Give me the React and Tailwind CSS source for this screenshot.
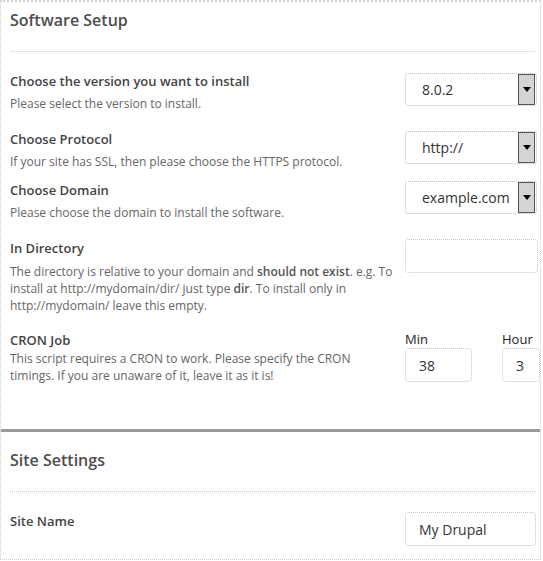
import React from 'react';

const SelectBox = ({ value, className = '' }) => (
    <div className={`flex h-[33px] w-[132px] items-center rounded-[3px] border border-dotted border-[#bdbdbd] pl-[16px] pr-px ${className}`}>
        <span className="flex-1 text-[14px] text-[#333]">{value}</span>
        <div className="flex h-[31px] w-[17px] items-center justify-center border border-[#555] bg-[#d4d4d4]">
            <svg width="8" height="5" viewBox="0 0 8 5"><path d="M0 0h8L4 5z" fill="#000" /></svg>
        </div>
    </div>
);

const TextBox = ({ value = '', className = '' }) => (
    <input
        defaultValue={value}
        className={`h-[34px] rounded-[4px] border border-dotted border-[#c4c4c4] px-[13px] text-[14px] text-[#333] outline-none ${className}`}
    />
);

const Label = ({ children }) => (
    <div className="text-[13px] font-semibold leading-[18px] text-[#444]">{children}</div>
);

const Help = ({ children, className = '' }) => (
    <div className={`text-[12px] leading-[17px] text-[#666] ${className}`}>{children}</div>
);

export default function App() {
    return (
        <div className="h-[561px] w-[543px] bg-white font-['Open_Sans',sans-serif]">
            <div className="h-[560px] w-[541px] border-x border-t-2 border-b border-dotted border-x-[#c6cec6] border-t-[#cbd3cb] border-b-[#c6cec6]">
                {/* software setup */}
                <div className="h-[49px] pl-[9px] pt-[6px] text-[16px] font-semibold leading-[24px] text-[#4d4d4d]">Software Setup</div>
                <div className="ml-[9px] mr-[5px] h-px bg-[#dfe6df]" />

                <div className="mt-[20px] flex">
                    <div className="w-[404px] shrink-0 pl-[9px]">
                        <Label>Choose the version you want to install</Label>
                        <Help className="mt-[5px]">Please select the version to install.</Help>
                    </div>
                    <SelectBox value="8.0.2" className="mt-px" />
                </div>

                <div className="mt-[18px] flex">
                    <div className="w-[404px] shrink-0 pl-[9px]">
                        <Label>Choose Protocol</Label>
                        <Help className="mt-[5px]">If your site has SSL, then please choose the HTTPS protocol.</Help>
                    </div>
                    <SelectBox value="http://" className="mt-px h-[32px]" />
                </div>

                <div className="mt-[11px] flex">
                    <div className="w-[404px] shrink-0 pl-[9px]">
                        <Label>Choose Domain</Label>
                        <Help className="mt-[5px]">Please choose the domain to install the software.</Help>
                    </div>
                    <SelectBox value="example.com" className="border-[#b9c9b9]" />
                </div>

                <div className="mt-[18px] flex">
                    <div className="w-[404px] shrink-0 pl-[9px]">
                        <Label>In Directory</Label>
                        <Help className="mt-[6px]">
                            The directory is relative to your domain and <b className="font-semibold text-[#555]">should not exist</b>. e.g. To install at http://mydomain/dir/ just type <b className="font-semibold text-[#555]">dir</b>. To install only in http://mydomain/ leave this empty.
                        </Help>
                    </div>
                    <TextBox className="w-[133px]" />
                </div>

                <div className="mt-[17px] flex">
                    <div className="w-[404px] shrink-0 pl-[9px]">
                        <Label>CRON Job</Label>
                        <Help className="mt-px pr-[40px]">This script requires a CRON to work. Please specify the CRON timings. If you are unaware of it, leave it as it is!</Help>
                    </div>
                    <div className="flex gap-[30px]">
                        <div className="flex flex-col">
                            <span className="text-[13px] leading-[17px] text-[#222]">Min</span>
                            <TextBox value="38" className="w-[67px]" />
                        </div>
                        <div className="flex flex-col">
                            <span className="text-[13px] leading-[17px] text-[#222]">Hour</span>
                            <TextBox value="3" className="w-[38px] px-[12px]" />
                        </div>
                    </div>
                </div>

                {/* thick divider */}
                <div className="mt-[45px] h-[3px] bg-[#9a9a9a]" />

                {/* site settings */}
                <div className="h-[59px] pl-[9px] pt-[16px] text-[16px] font-semibold leading-[24px] text-[#4d4d4d]">Site Settings</div>
                <div className="ml-[9px] mr-[5px] border-t border-dotted border-[#c8c8c8]" />

                <div className="mt-[20px] flex">
                    <div className="w-[404px] shrink-0 pl-[9px]">
                        <Label>Site Name</Label>
                    </div>
                    <TextBox value="My Drupal" className="w-[131px]" />
                </div>
            </div>
        </div>
    );
}
